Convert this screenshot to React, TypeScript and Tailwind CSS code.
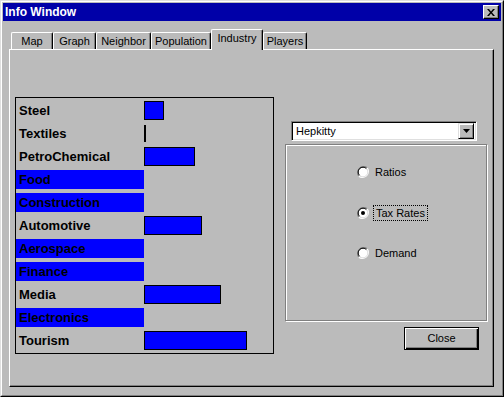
const rows = [
  { name: "Steel", bar: 20 },
  { name: "Textiles", bar: 2 },
  { name: "PetroChemical", bar: 51 },
  { name: "Food", hot: true },
  { name: "Construction", hot: true },
  { name: "Automotive", bar: 58 },
  { name: "Aerospace", hot: true },
  { name: "Finance", hot: true },
  { name: "Media", bar: 77 },
  { name: "Electronics", hot: true },
  { name: "Tourism", bar: 103 },
];

const tabs = [
  { label: "Map", w: "w-[42px]" },
  { label: "Graph", w: "w-[43px]" },
  { label: "Neighbor", w: "w-[55px]" },
  { label: "Population", w: "w-[60px]" },
  { label: "Industry", w: "w-[52px]", active: true },
  { label: "Players", w: "w-[44px]" },
];

const Radio = ({ checked }: { checked?: boolean }) => (
  <svg width="12" height="12" viewBox="0 0 12 12" className="shrink-0">
    <circle cx="6" cy="6" r="5" fill="#fff" />
    <path d="M1.8 10.2 A6 6 0 0 1 10.2 1.8" stroke="#808080" strokeWidth="1.2" fill="none" />
    <path d="M10.2 1.8 A6 6 0 0 1 1.8 10.2" stroke="#fff" strokeWidth="1.2" fill="none" />
    <path d="M2.6 9.4 A4.8 4.8 0 0 1 9.4 2.6" stroke="#000" strokeWidth="1" fill="none" />
    <path d="M9.4 2.6 A4.8 4.8 0 0 1 2.6 9.4" stroke="#dfdfdf" strokeWidth="1" fill="none" />
    {checked && <circle cx="6" cy="6" r="2" fill="#000" />}
  </svg>
);

export default function App() {
  return (
    <div className="w-[504px] h-[397px] bg-[#bbbbbb] border border-t-[#dfdfdf] border-l-[#dfdfdf] border-r-black border-b-black font-['Liberation_Sans',Arial,sans-serif] text-black select-none">
      <div className="h-full flex flex-col border border-t-white border-l-white border-r-[#808080] border-b-[#808080] p-px">
        {/* title bar */}
        <div className="h-[18px] bg-[#0000a8] flex items-center justify-between pl-[2px] pr-[2px]">
          <span className="text-white font-bold text-[12px] leading-none">Info Window</span>
          <div className="w-[16px] h-[14px] bg-[#bbbbbb] border border-t-white border-l-white border-r-black border-b-black shadow-[inset_-1px_-1px_0_#808080] flex items-center justify-center">
            <svg width="8" height="7" viewBox="0 0 8 7">
              <path d="M0 0h2l2 2.5L6 0h2L5 3.5 8 7H6L4 4.5 2 7H0l3-3.5z" fill="#000" />
            </svg>
          </div>
        </div>

        {/* tabs */}
        <div className="flex items-end ml-[8px] mt-[8px] h-[20px] relative z-10">
          {tabs.map((t) => (
            <div
              key={t.label}
              className={`${t.w} ${
                t.active ? "h-[21px] -mb-px bg-[#bbbbbb] pb-[3px]" : "h-[17px]"
              } flex items-center justify-center text-[11px] leading-none border-l border-t border-r border-l-white border-t-white border-r-black rounded-tl-[2px] rounded-tr-[2px] shadow-[inset_-1px_0_0_#808080]`}
            >
              {t.label}
            </div>
          ))}
        </div>

        {/* panel */}
        <div className="ml-[6px] w-[485px] h-[338px] border border-l-white border-t-white border-r-black border-b-black shadow-[inset_-1px_-1px_0_#808080] flex">
          {/* industry list */}
          <div className="ml-[5px] mt-[47px] w-[259px] h-[257px] border border-black pt-[3px] flex flex-col gap-[4px]">
            {rows.map((r) => (
              <div key={r.name} className="h-[19px] flex items-center">
                <div
                  className={`w-[128px] h-full flex items-center pl-[3px] text-[13px] font-bold leading-none ${
                    r.hot ? "bg-[#0000ff]" : ""
                  }`}
                >
                  {r.name}
                </div>
                {r.bar !== undefined &&
                  (r.bar <= 2 ? (
                    <div className="w-[2px] h-[17px] bg-black" />
                  ) : (
                    <div className="h-full bg-[#0000ff] border border-black" style={{ width: r.bar }} />
                  ))}
              </div>
            ))}
          </div>

          {/* right column */}
          <div className="ml-[11px] mt-[71px] w-[203px] flex flex-col">
            <div className="ml-[6px] w-[186px] h-[20px] bg-white border border-t-[#808080] border-l-[#808080] border-r-white border-b-white shadow-[inset_1px_1px_0_#000,inset_-1px_-1px_0_#dfdfdf] flex items-center justify-between pl-[4px] pr-[2px]">
              <span className="text-[11px] leading-none">Hepkitty</span>
              <div className="w-[16px] h-[16px] bg-[#bbbbbb] border border-t-[#dfdfdf] border-l-[#dfdfdf] border-r-black border-b-black shadow-[inset_1px_1px_0_#fff,inset_-1px_-1px_0_#808080] flex items-center justify-center">
                <svg width="7" height="4" viewBox="0 0 7 4">
                  <path d="M0 0h7L3.5 4z" fill="#000" />
                </svg>
              </div>
            </div>

            <div className="mt-[3px] w-[202px] h-[177px] border border-[#808080] shadow-[1px_1px_0_#fff,inset_1px_1px_0_#fff] pl-[71px] flex flex-col text-[11px] leading-none">
              <div className="mt-[19px] h-[16px] flex items-center">
                <Radio />
                <span className="ml-[5px] px-[1px]">Ratios</span>
              </div>
              <div className="mt-[25px] h-[16px] flex items-center">
                <Radio checked />
                <span className="ml-[4px] px-[2px] h-[16px] flex items-center border border-dotted border-black">
                  Tax Rates
                </span>
              </div>
              <div className="mt-[24px] h-[16px] flex items-center">
                <Radio />
                <span className="ml-[5px] px-[1px]">Demand</span>
              </div>
            </div>

            <button className="mt-[6px] ml-[119px] w-[75px] h-[23px] border border-black bg-[#bbbbbb] shadow-[inset_1px_1px_0_#fff,inset_-1px_-1px_0_#000,inset_-2px_-2px_0_#808080] text-[11px] leading-none flex items-center justify-center">
              Close
            </button>
          </div>
        </div>
      </div>
    </div>
  );
}
